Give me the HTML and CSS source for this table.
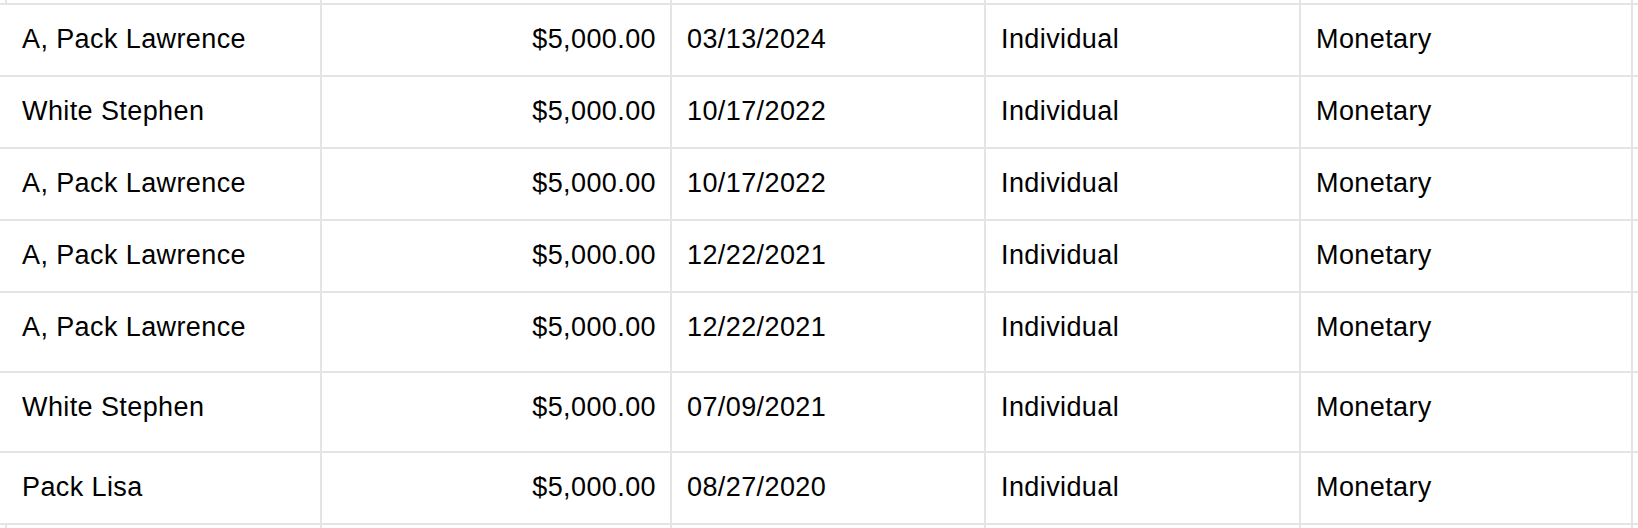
FILE: index.html
```html
<!DOCTYPE html>
<html>
<head>
<meta charset="utf-8">
<link rel="stylesheet" href="styles.css">
</head>
<body>
<div class="sheet">
  <div class="cell edge"></div><div class="cell edge"></div><div class="cell edge"></div><div class="cell edge"></div><div class="cell edge"></div><div class="cell edge"></div><div class="cell edge"></div>

  <div class="cell"></div>
  <div class="cell">A, Pack Lawrence</div>
  <div class="cell num">$5,000.00</div>
  <div class="cell">03/13/2024</div>
  <div class="cell">Individual</div>
  <div class="cell">Monetary</div>
  <div class="cell"></div>

  <div class="cell"></div>
  <div class="cell">White Stephen</div>
  <div class="cell num">$5,000.00</div>
  <div class="cell">10/17/2022</div>
  <div class="cell">Individual</div>
  <div class="cell">Monetary</div>
  <div class="cell"></div>

  <div class="cell"></div>
  <div class="cell">A, Pack Lawrence</div>
  <div class="cell num">$5,000.00</div>
  <div class="cell">10/17/2022</div>
  <div class="cell">Individual</div>
  <div class="cell">Monetary</div>
  <div class="cell"></div>

  <div class="cell"></div>
  <div class="cell">A, Pack Lawrence</div>
  <div class="cell num">$5,000.00</div>
  <div class="cell">12/22/2021</div>
  <div class="cell">Individual</div>
  <div class="cell">Monetary</div>
  <div class="cell"></div>

  <div class="cell"></div>
  <div class="cell">A, Pack Lawrence</div>
  <div class="cell num">$5,000.00</div>
  <div class="cell">12/22/2021</div>
  <div class="cell">Individual</div>
  <div class="cell">Monetary</div>
  <div class="cell"></div>

  <div class="cell"></div>
  <div class="cell">White Stephen</div>
  <div class="cell num">$5,000.00</div>
  <div class="cell">07/09/2021</div>
  <div class="cell">Individual</div>
  <div class="cell">Monetary</div>
  <div class="cell"></div>

  <div class="cell"></div>
  <div class="cell">Pack Lisa</div>
  <div class="cell num">$5,000.00</div>
  <div class="cell">08/27/2020</div>
  <div class="cell">Individual</div>
  <div class="cell">Monetary</div>
  <div class="cell"></div>

  <div class="cell edge"></div><div class="cell edge"></div><div class="cell edge"></div><div class="cell edge"></div><div class="cell edge"></div><div class="cell edge"></div><div class="cell edge"></div>
</div>
</body>
</html>
```

FILE: styles.css
```css
html, body {
  margin: 0;
  padding: 0;
  background: #ffffff;
}

.sheet {
  display: grid;
  grid-template-columns: 5px 313px 348px 312px 313px 330px 5px;
  grid-template-rows: 3px 70px 70px 70px 70px 78px 78px 70px 3px;
  gap: 2px;
  background: #e4e4e4;
  width: 1638px;
  height: 528px;
  overflow: hidden;
  font-family: "Liberation Sans", Arial, sans-serif;
  font-size: 27px;
  line-height: 30px;
  letter-spacing: 0.4px;
  color: #000000;
}

.cell {
  background: #ffffff;
  padding: 19px 14px 0 15px;
  white-space: nowrap;
  overflow: hidden;
}

.cell.edge {
  padding: 0;
}

.num {
  text-align: right;
}
```
